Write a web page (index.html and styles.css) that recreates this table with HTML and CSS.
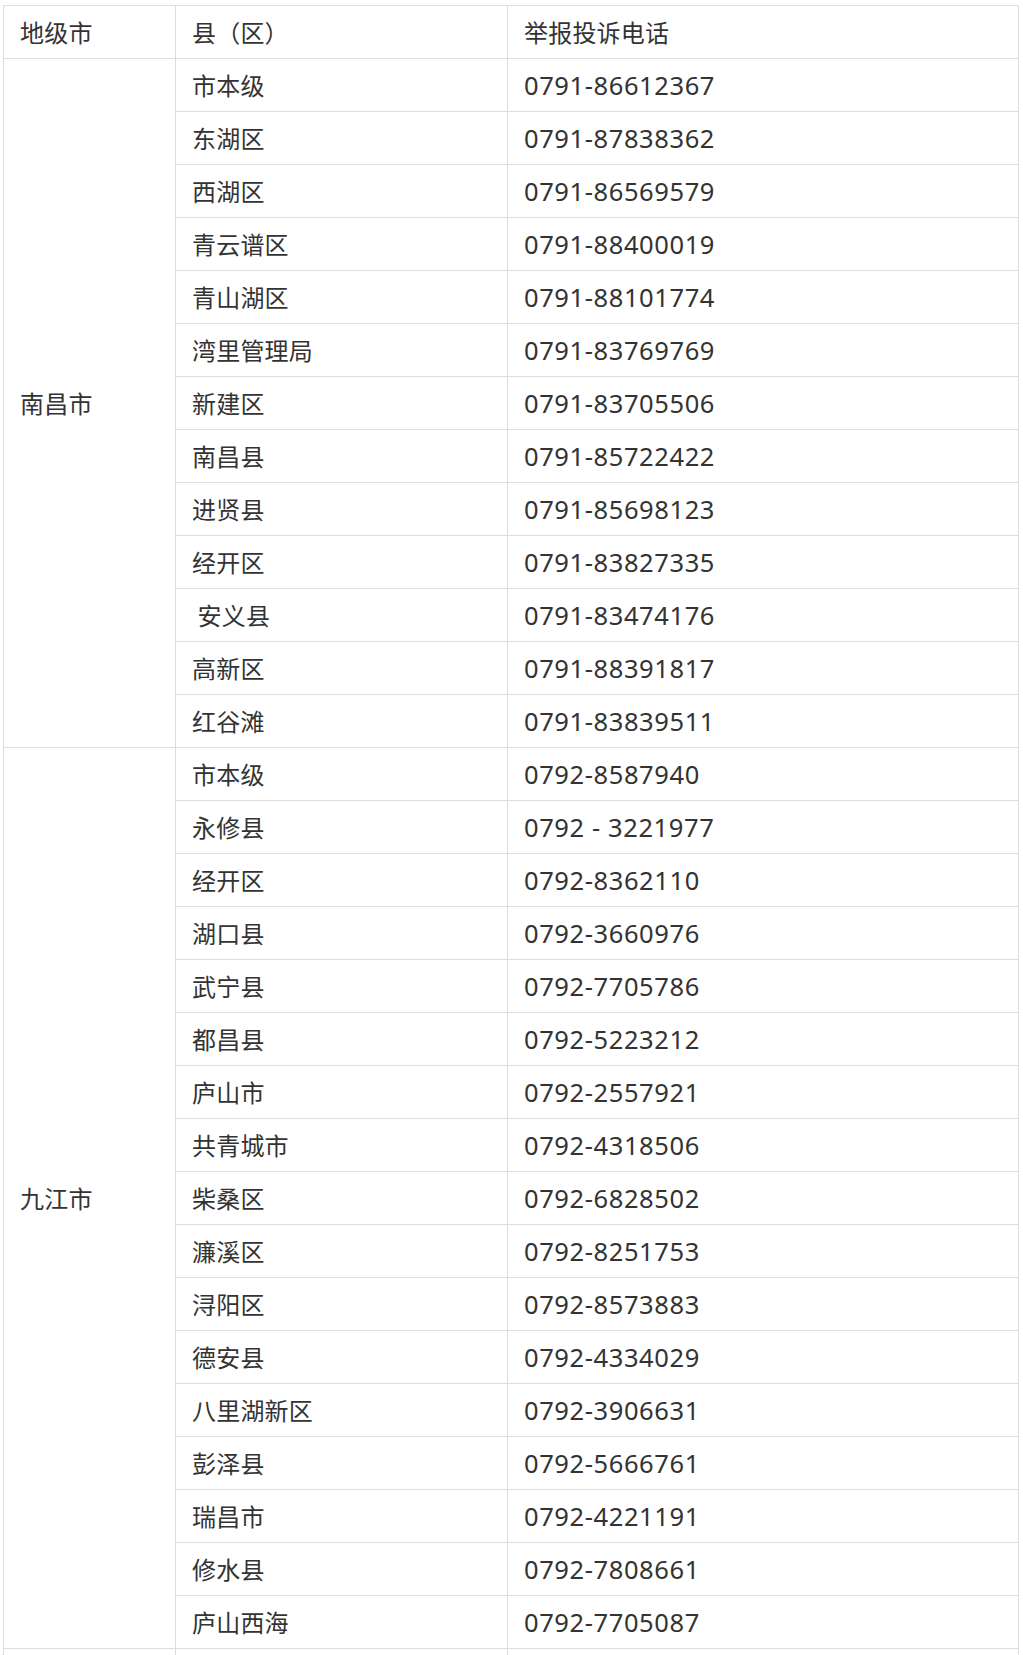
FILE: index.html
```html
<!DOCTYPE html>
<html lang="zh-CN">
<head>
<meta charset="utf-8">
<title>举报投诉电话</title>
<link rel="stylesheet" href="styles.css">
</head>
<body>
<table class="phone-table">
  <colgroup>
    <col class="col-city">
    <col class="col-county">
    <col class="col-phone">
  </colgroup>
  <thead>
    <tr><th>地级市</th><th>县（区）</th><th>举报投诉电话</th></tr>
  </thead>
  <tbody>
    <tr><td rowspan="13">南昌市</td><td>市本级</td><td class="tel">0791-86612367</td></tr>
    <tr><td>东湖区</td><td class="tel">0791-87838362</td></tr>
    <tr><td>西湖区</td><td class="tel">0791-86569579</td></tr>
    <tr><td>青云谱区</td><td class="tel">0791-88400019</td></tr>
    <tr><td>青山湖区</td><td class="tel">0791-88101774</td></tr>
    <tr><td>湾里管理局</td><td class="tel">0791-83769769</td></tr>
    <tr><td>新建区</td><td class="tel">0791-83705506</td></tr>
    <tr><td>南昌县</td><td class="tel">0791-85722422</td></tr>
    <tr><td>进贤县</td><td class="tel">0791-85698123</td></tr>
    <tr><td>经开区</td><td class="tel">0791-83827335</td></tr>
    <tr><td>&nbsp;安义县</td><td class="tel">0791-83474176</td></tr>
    <tr><td>高新区</td><td class="tel">0791-88391817</td></tr>
    <tr><td>红谷滩</td><td class="tel">0791-83839511</td></tr>
    <tr><td rowspan="17">九江市</td><td>市本级</td><td class="tel">0792-8587940</td></tr>
    <tr><td>永修县</td><td class="tel">0792 - 3221977</td></tr>
    <tr><td>经开区</td><td class="tel">0792-8362110</td></tr>
    <tr><td>湖口县</td><td class="tel">0792-3660976</td></tr>
    <tr><td>武宁县</td><td class="tel">0792-7705786</td></tr>
    <tr><td>都昌县</td><td class="tel">0792-5223212</td></tr>
    <tr><td>庐山市</td><td class="tel">0792-2557921</td></tr>
    <tr><td>共青城市</td><td class="tel">0792-4318506</td></tr>
    <tr><td>柴桑区</td><td class="tel">0792-6828502</td></tr>
    <tr><td>濂溪区</td><td class="tel">0792-8251753</td></tr>
    <tr><td>浔阳区</td><td class="tel">0792-8573883</td></tr>
    <tr><td>德安县</td><td class="tel">0792-4334029</td></tr>
    <tr><td>八里湖新区</td><td class="tel">0792-3906631</td></tr>
    <tr><td>彭泽县</td><td class="tel">0792-5666761</td></tr>
    <tr><td>瑞昌市</td><td class="tel">0792-4221191</td></tr>
    <tr><td>修水县</td><td class="tel">0792-7808661</td></tr>
    <tr><td>庐山西海</td><td class="tel">0792-7705087</td></tr>
    <tr><td></td><td></td><td></td></tr>
  </tbody>
</table>
</body>
</html>
```

FILE: styles.css
```css
html, body {
  margin: 0;
  padding: 0;
  background: #ffffff;
}

body {
  padding: 5px 0 0 3px;
  font-family: "Noto Sans CJK SC", "Noto Sans", sans-serif;
  color: #333333;
}

.phone-table {
  border-collapse: collapse;
  table-layout: fixed;
  width: 1015px;
  font-size: 24px;
}

.col-city { width: 172px; }
.col-county { width: 332px; }
.col-phone { width: 511px; }

.phone-table th,
.phone-table td {
  border: 1px solid #dddddd;
  height: 53px;
  padding: 0 16px;
  text-align: left;
  vertical-align: middle;
  font-weight: normal;
  line-height: 1.5;
  letter-spacing: 0.2px;
  white-space: nowrap;
  box-sizing: border-box;
}

.phone-table td.tel {
  font-family: "Noto Sans", "Noto Sans CJK SC", sans-serif;
  font-size: 25.5px;
  letter-spacing: 0.6px;
  padding-top: 1px;
}
```
